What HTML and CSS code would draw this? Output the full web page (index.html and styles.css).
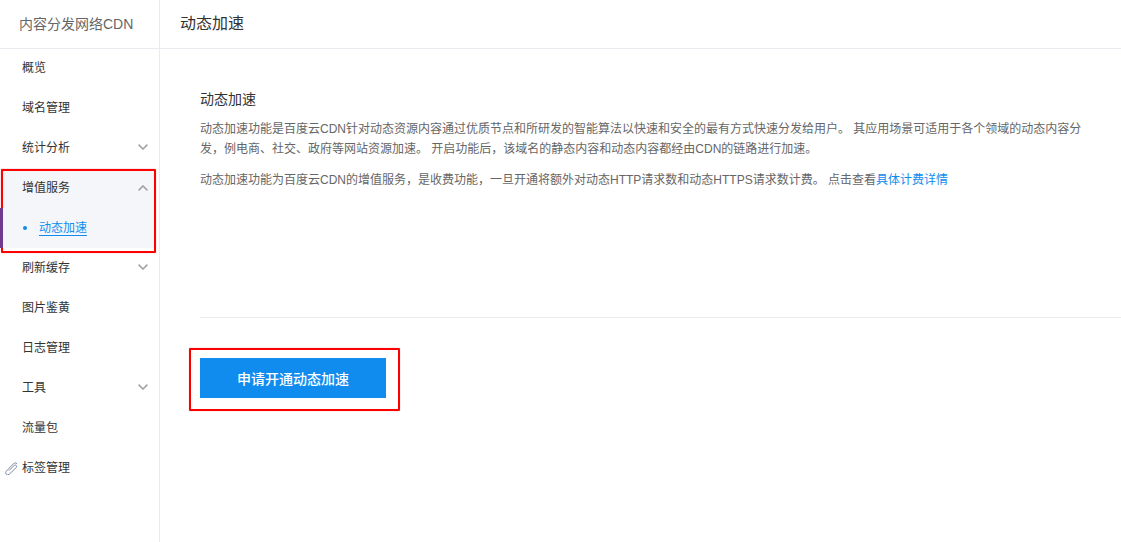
FILE: index.html
```html
<!DOCTYPE html>
<html lang="zh-CN">
<head>
<meta charset="utf-8">
<title>动态加速</title>
<link rel="stylesheet" href="styles.css">
</head>
<body>
<div class="app">
  <aside class="sidebar">
    <div class="brand">内容分发网络CDN</div>
    <nav class="menu">
      <a class="item">概览</a>
      <a class="item">域名管理</a>
      <a class="item">统计分析<svg class="chev" viewBox="0 0 10 6"><path d="M.6.6 5 5 9.400.6"/></svg></a>
      <div class="group">
        <a class="item">增值服务<svg class="chev chev-open" viewBox="0 0 10 6"><path d="M.6 5.400 5 1l4.400 4.400"/></svg></a>
        <a class="item sub"><span class="dot"></span><span class="sublabel">动态加速</span></a>
        <span class="marker"></span>
      </div>
      <a class="item">刷新缓存<svg class="chev" viewBox="0 0 10 6"><path d="M.6.6 5 5 9.400.6"/></svg></a>
      <a class="item">图片鉴黄</a>
      <a class="item">日志管理</a>
      <a class="item">工具<svg class="chev" viewBox="0 0 10 6"><path d="M.6.6 5 5 9.400.6"/></svg></a>
      <a class="item">流量包</a>
      <a class="item"><svg class="clip" viewBox="0 0 13 13"><path d="M4 8.600 9.300 3.300a1.500 1.500 0 0 1 2.100 2.100L4.300 12.200a2.100 2.100 0 0 1-3-3L8.500 1.700a2.500 2.500 0 0 1 3.500 0"/></svg>标签管理</a>
    </nav>
    <span class="callout callout-menu"></span>
  </aside>
  <main class="main">
    <header class="topbar">动态加速</header>
    <section class="intro">
      <h2 class="intro-title">动态加速</h2>
      <p class="intro-text">动态加速功能是百度云CDN针对动态资源内容通过优质节点和所研发的智能算法以快速和安全的最有方式快速分发给用户。 其应用场景可适用于各个领域的动态内容分发，例电商、社交、政府等网站资源加速。 开启功能后，该域名的静态内容和动态内容都经由CDN的链路进行加速。</p>
      <p class="intro-text second">动态加速功能为百度云CDN的增值服务，是收费功能，一旦开通将额外对动态HTTP请求数和动态HTTPS请求数计费。 点击查看<a class="link">具体计费详情</a></p>
    </section>
    <div class="actions">
      <button class="primary">申请开通动态加速</button>
      <span class="callout callout-btn"></span>
    </div>
  </main>
</div>
</body>
</html>
```
FILE: styles.css
```css
* { box-sizing: border-box; }
html, body { margin: 0; height: 100%; background: #fff; overflow: hidden; }
body { font-family: "Liberation Sans", "Noto Sans CJK SC", sans-serif; font-size: 12px; color: #333; }
.app { display: flex; height: 542px; }
.sidebar { position: relative; width: 160px; flex: none; border-right: 1px solid #e8ebf0; }
.brand { height: 49px; border-bottom: 1px solid #e8ebf0; font-size: 14px; line-height: 48px; padding-left: 19px; color: #666; }
.menu { display: flex; flex-direction: column; margin-top: -1px; }
.item { position: relative; display: flex; align-items: center; height: 40px; padding-left: 22px; line-height: 16px; color: #333; }
.chev { position: absolute; right: 11px; top: 16px; width: 10px; height: 6px; fill: none; stroke: #a0a0a0; stroke-width: 1.500; }
.chev-open { right: 8px; top: 17px; }
.group { position: relative; background: #f5f6fa; width: 156px; height: 80px; }
.sub { color: #108cee; padding-left: 23px; }
.dot { width: 4px; height: 4px; border-radius: 50%; background: #108cee; margin-right: 12px; }
.sublabel { border-bottom: 1px solid #108cee; line-height: 14px; margin-top: 1px; }
.marker { position: absolute; z-index: 1; left: 0; top: 40px; width: 3px; height: 40px; background: #6f3a8c; }
.clip { position: absolute; left: 5px; top: 14px; width: 13px; height: 13px; fill: none; stroke: #7d8ba3; stroke-width: 1; }
.callout { position: absolute; border: 2px solid #f00; border-radius: 1px; box-shadow: 0 0 1px rgba(255, 0, 0, .6); pointer-events: none; }
.callout-menu { left: 1px; top: 169px; width: 155px; height: 84px; }
.main { flex: 1; min-width: 0; }
.topbar { height: 49px; border-bottom: 1px solid #e8ebf0; font-size: 16px; line-height: 47px; padding-left: 20px; color: #333; }
.intro { height: 269px; margin-left: 40px; padding-top: 40px; border-bottom: 1px solid #e8ebf0; }
.intro-title { margin: 0; font-size: 14px; font-weight: 400; line-height: 20px; color: #333; }
.intro-text { margin: 10px 0 0; width: 890px; line-height: 20px; color: #666; }
.intro-text.second { margin-top: 11px; }
.link { color: #108cee; }
.actions { position: relative; padding: 40px 0 0 40px; }
.primary { display: block; width: 186px; height: 40px; border: 0; padding: 0; background: #108cee; color: #fff; font: 500 14px "Liberation Sans", "Noto Sans CJK SC", sans-serif; }
.callout-btn { left: 29px; top: 30px; width: 211px; height: 63px; }
```
